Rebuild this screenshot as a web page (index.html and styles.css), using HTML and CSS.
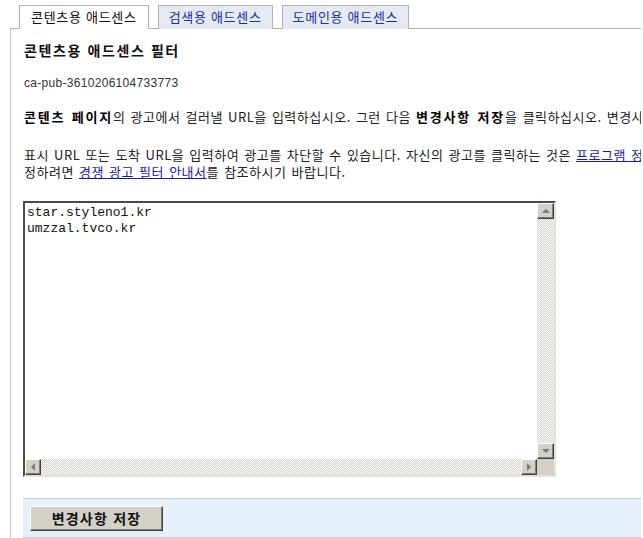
FILE: index.html
```html
<!DOCTYPE html>
<html lang="ko">
<head>
<meta charset="utf-8">
<title>콘텐츠용 애드센스 필터</title>
<link rel="stylesheet" href="styles.css">
</head>
<body>
<div class="page">
  <div class="tabs">
    <div class="tab active">콘텐츠용 애드센스</div>
    <div class="tab">검색용 애드센스</div>
    <div class="tab">도메인용 애드센스</div>
  </div>
  <div class="panel">
    <h1 class="title">콘텐츠용 애드센스 필터</h1>
    <p class="pubid">ca-pub-3610206104733773</p>
    <p class="line"><b>콘텐츠 페이지</b>의 광고에서 걸러낼 URL을 입력하십시오. 그런 다음 <b>변경사항 저장</b>을 클릭하십시오. 변경사항은 몇 시간 내에 적용됩니다.</p>
    <p class="lines">표시 URL 또는 도착 URL을 입력하여 광고를 차단할 수 있습니다. 자신의 광고를 클릭하는 것은 <a href="#">프로그램 정책</a> 위반입니다. 필터를 수<br>정하려면 <a href="#">경쟁 광고 필터 안내서</a>를 참조하시기 바랍니다.</p>
    <div class="editor">
      <div class="editor-text">star.styleno1.kr<br>umzzal.tvco.kr</div>
      <div class="vscroll">
        <div class="sbtn"><span class="arr up"></span></div>
        <div class="track"></div>
        <div class="sbtn"><span class="arr down"></span></div>
      </div>
      <div class="hscroll">
        <div class="sbtn"><span class="arr left"></span></div>
        <div class="track"></div>
        <div class="sbtn"><span class="arr right"></span></div>
      </div>
      <div class="corner"></div>
    </div>
    <div class="savebar">
      <button class="save">변경사항 저장</button>
    </div>
  </div>
</div>
</body>
</html>
```
FILE: styles.css
```css
html, body {
  margin: 0;
  padding: 0;
  background: #fff;
}
body {
  overflow: hidden;
  font-family: "Liberation Sans", "Noto Sans CJK KR", sans-serif;
  font-size: 12px;
  color: #222;
}
.page {
  width: 641px;
  height: 538px;
  overflow: hidden;
}
.tabs {
  display: flex;
  gap: 9px;
  margin-left: 10px;
  padding: 5px 0 0 9px;
  border-bottom: 1px solid #b4b4b4;
  height: 23px;
}
.tab {
  box-sizing: border-box;
  height: 24px;
  padding: 0 10px;
  border: 1px solid #b4b4b4;
  border-bottom: none;
  background: #e5e9f2;
  color: #1c2f9e;
  font-family: "Noto Sans CJK KR", sans-serif;
  font-size: 13px;
  letter-spacing: 0.7px;
  line-height: 22px;
  white-space: nowrap;
}
.tab.active {
  background: #fff;
  color: #111;
  position: relative;
  z-index: 1;
  padding: 0 11px;
}
.panel {
  margin-left: 10px;
  border-left: 1px solid #c4c4c4;
  padding: 12px 0 0 13px;
  height: 510px;
  overflow: hidden;
}
.title {
  margin: 0;
  font-family: "Noto Sans CJK KR", sans-serif;
  font-size: 14px;
  font-weight: bold;
  line-height: 18px;
  color: #111;
  letter-spacing: 1.6px;
}
.pubid {
  margin: 16px 0 0;
  line-height: 16px;
  color: #333;
  letter-spacing: 0.3px;
}
.line {
  margin: 18px 0 0;
  line-height: 16px;
  white-space: nowrap;
  font-family: "Noto Sans CJK KR", sans-serif;
  font-size: 13px;
  letter-spacing: 0.5px;
  word-spacing: 1px;
}
.line b {
  letter-spacing: 1.8px;
}
.lines {
  margin: 21px 0 0;
  line-height: 17px;
  white-space: nowrap;
  font-family: "Noto Sans CJK KR", sans-serif;
  font-size: 13px;
  letter-spacing: 0.5px;
  word-spacing: 1px;
}
.line b, .lines b {
  color: #000;
}
a {
  color: #1a1aa8;
  text-decoration: underline;
}
.editor {
  box-sizing: border-box;
  margin: 21px 0 0 -1px;
  width: 533px;
  height: 276px;
  border: 2px solid;
  border-color: #4a4a4a #e4e2dc #e4e2dc #4a4a4a;
  display: grid;
  grid-template-columns: 1fr 17px;
  grid-template-rows: 1fr 16px;
  background: #fff;
}
.editor-text {
  font-family: "Liberation Mono", monospace;
  font-size: 13px;
  line-height: 16px;
  color: #111;
  padding: 2px 2px;
}
.vscroll {
  display: flex;
  flex-direction: column;
}
.hscroll {
  display: flex;
}
.track {
  flex: 1;
  background-color: #fff;
  background-image: conic-gradient(#d4d0c8 25%, #fff 0 50%, #d4d0c8 0 75%, #fff 0);
  background-size: 2px 2px;
}
.sbtn {
  box-sizing: border-box;
  width: 17px;
  height: 16px;
  background: #d4d0c8;
  border: 1px solid;
  border-color: #fff #404040 #404040 #fff;
  box-shadow: inset -1px -1px 0 #808080;
  display: flex;
  align-items: center;
  justify-content: center;
}
.hscroll .sbtn {
  width: 16px;
}
.arr {
  width: 0;
  height: 0;
  border: 4px solid transparent;
}
.arr.up {
  border-bottom-color: #7a7a7a;
  border-top-width: 0;
  margin-top: -1px;
}
.arr.down {
  border-top-color: #7a7a7a;
  border-bottom-width: 0;
}
.arr.left {
  border-right-color: #7a7a7a;
  border-left-width: 0;
}
.arr.right {
  border-left-color: #7a7a7a;
  border-right-width: 0;
}
.corner {
  background: #d4d0c8;
}
.savebar {
  margin: 21px 0 0 -1px;
  background: #e6f0fb;
  border-top: 1px solid #c6ced8;
  border-bottom: 1px solid #c6ced8;
  padding: 7px 0 0 7px;
  box-sizing: border-box;
  height: 40px;
}
.save {
  box-sizing: border-box;
  width: 133px;
  height: 25px;
  margin: 0;
  padding: 0;
  background: #d4d0c8;
  border: 1px solid;
  border-color: #fff #404040 #404040 #fff;
  box-shadow: inset -1px -1px 0 #808080;
  font-family: "Noto Sans CJK KR", sans-serif;
  font-size: 14px;
  font-weight: bold;
  letter-spacing: 1.2px;
  color: #111;
  line-height: 21px;
}
```
